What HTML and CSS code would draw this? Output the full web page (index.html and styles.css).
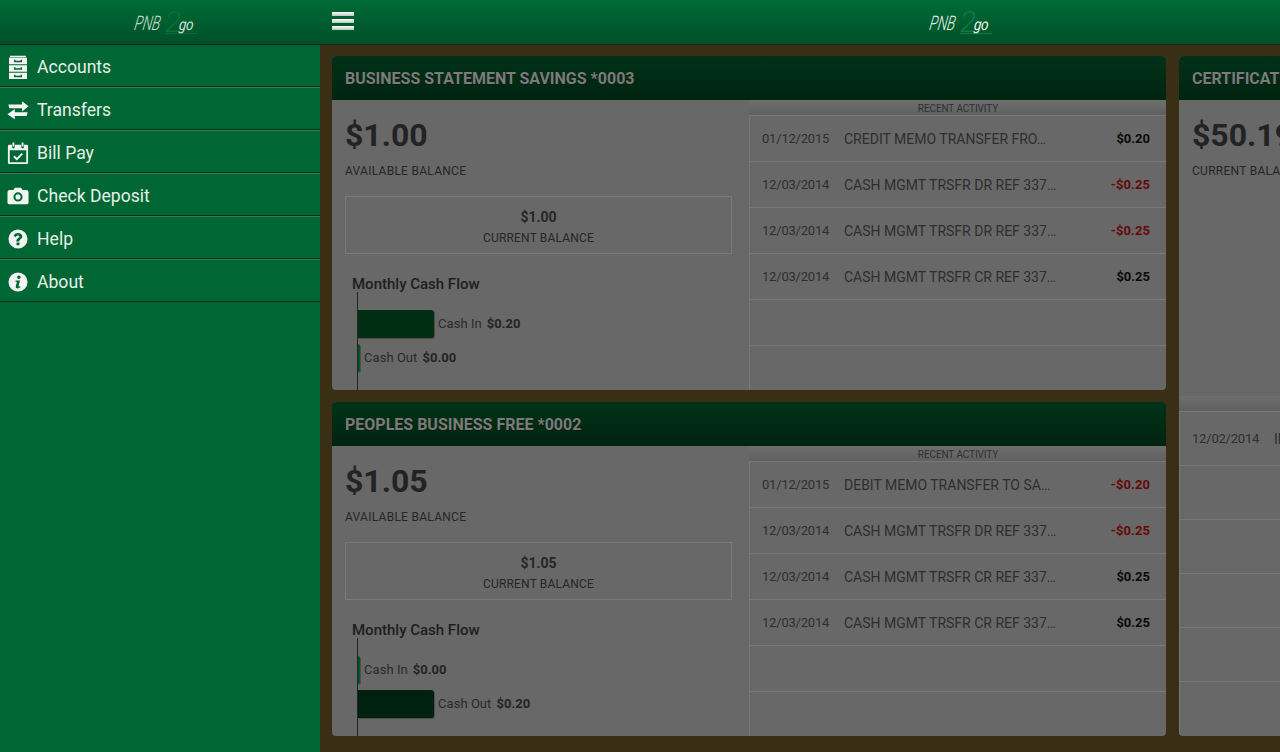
FILE: index.html
```html
<!DOCTYPE html>
<html lang="en">
<head>
<meta charset="utf-8">
<title>PNB2go</title>
<link rel="stylesheet" href="styles.css">
</head>
<body>
<div class="app">
  <aside class="sidebar">
    <header class="bar bar-side">
      <div class="logo"><span class="logo-pnb"><span>PNB</span></span><span class="logo-two">2</span><span class="logo-go">go</span></div>
    </header>
    <nav class="menu">
      <a class="item"><svg class="ico" viewBox="0 -0.7 20 24"><path fill="#f2f5f2" fill-rule="evenodd" d="M2 0h16v1.500H2zM1 2h18v6.500H1zM1 9.500h18v6.500H1zM1 17h18v6.500H1zM6 4v2.500h8V4h-1.500v1h-5V4zM6 11.500V14h8v-2.500h-1.500v1h-5v-1zM6 19v2.500h8V19h-1.500v1h-5v-1z"/></svg><span>Accounts</span></a>
      <a class="item"><svg class="ico" viewBox="0 0 24 24"><path fill="#f2f5f2" d="M1.500 6h15V2.500l7 5.500-7 5.500V10h-14zM22.500 14.500h-14V11L.5 16.500 8.500 22v-3.500h13z"/></svg><span>Transfers</span></a>
      <a class="item"><svg class="ico" viewBox="0 0 24 24"><path fill="#f2f5f2" fill-rule="evenodd" d="M2.500 3h3v2.500a1.500 1.500 0 0 0 3 0V3h7v2.500a1.500 1.500 0 0 0 3 0V3h3A1.500 1.500 0 0 1 23 4.500v18a1.500 1.500 0 0 1-1.500 1.500h-19A1.500 1.500 0 0 1 1 22.500v-18A1.500 1.500 0 0 1 2.500 3zM3 9v13h18V9z"/><path fill="#f2f5f2" d="M6 .5h2v4.500H6zM16 .5h2v4.500h-2z"/><path fill="none" stroke="#f2f5f2" stroke-width="2.200" d="M7.500 15.500l3.200 3.200 6-6"/></svg><span>Bill Pay</span></a>
      <a class="item"><svg class="ico" viewBox="0 0 24 24"><path fill="#f2f5f2" fill-rule="evenodd" d="M3 5.500h4L8.500 3h7L17 5.500h4A2.500 2.500 0 0 1 23.500 8v11a2 2 0 0 1-2 2h-19a2 2 0 0 1-2-2V8A2.500 2.500 0 0 1 3 5.500zm9 2.500a5 5 0 1 0 0 10 5 5 0 0 0 0-10zm0 2.200a2.800 2.800 0 1 1 0 5.600 2.800 2.800 0 0 1 0-5.600z"/></svg><span>Check Deposit</span></a>
      <a class="item"><svg class="ico" viewBox="0 0 24 24"><path fill="#f2f5f2" fill-rule="evenodd" d="M12 1.600a10.400 10.400 0 1 1 0 20.800 10.400 10.400 0 0 1 0-20.800zm-1.600 14.300v2.900h3.200v-2.900zM12 5.500c-2.400 0-4.100 1.100-4.700 3.300l2.400 1c.4-1.100 1.100-1.700 2.200-1.700.9 0 1.600.5 1.600 1.200 0 1.500-3.300 1.800-3.300 5.300h3.200c0-2.200 3.300-2.500 3.300-5.500 0-2.200-2.200-3.600-4.700-3.600z"/></svg><span>Help</span></a>
      <a class="item"><svg class="ico" viewBox="0 0 24 24"><path fill="#f2f5f2" fill-rule="evenodd" d="M12 1.600a10.400 10.400 0 1 1 0 20.800 10.400 10.400 0 0 1 0-20.800zm1 3.400a1.900 1.900 0 1 0 0 3.800 1.900 1.900 0 0 0 0-3.800zM9.300 10.400v1.300h1.500l-1.200 5c-.3 1.600.5 2.300 1.800 2.300 1.200 0 2.400-.6 3.300-1.500l-.5-1.100c-.4.400-1 .6-1.300.6-.3 0-.4-.2-.3-.6l1.600-6z"/></svg><span>About</span></a>
    </nav>
  </aside>

  <div class="main">
    <header class="bar bar-main">
      <div class="burger"><i></i><i></i><i></i></div>
      <div class="logo logo-main"><span class="logo-pnb"><span>PNB</span></span><span class="logo-two">2</span><span class="logo-go">go</span></div>
    </header>
    <div class="content">
      <div class="column">
        <section class="card">
          <h2 class="card-title">BUSINESS STATEMENT SAVINGS *0003</h2>
          <div class="card-body">
            <div class="summary">
              <div class="big">$1.00</div>
              <div class="cap">AVAILABLE BALANCE</div>
              <div class="box"><b>$1.00</b><span>CURRENT BALANCE</span></div>
              <div class="flow-title">Monthly Cash Flow</div>
              <div class="chart">
                <div class="flow"><div class="fill"></div><span>Cash In</span><b>$0.20</b></div>
                <div class="flow"><div class="fill tiny"></div><span>Cash Out</span><b>$0.00</b></div>
              </div>
            </div>
            <div class="activity">
              <div class="act-head">RECENT ACTIVITY</div>
              <div class="row"><span class="date">01/12/2015</span><span class="desc">CREDIT MEMO TRANSFER FRO…</span><b class="amt">$0.20</b></div>
              <div class="row"><span class="date">12/03/2014</span><span class="desc">CASH MGMT TRSFR DR REF 337…</span><b class="amt neg">-$0.25</b></div>
              <div class="row"><span class="date">12/03/2014</span><span class="desc">CASH MGMT TRSFR DR REF 337…</span><b class="amt neg">-$0.25</b></div>
              <div class="row"><span class="date">12/03/2014</span><span class="desc">CASH MGMT TRSFR CR REF 337…</span><b class="amt">$0.25</b></div>
              <div class="row"></div>
              <div class="row last"></div>
            </div>
          </div>
        </section>
        <section class="card">
          <h2 class="card-title">PEOPLES BUSINESS FREE *0002</h2>
          <div class="card-body">
            <div class="summary">
              <div class="big">$1.05</div>
              <div class="cap">AVAILABLE BALANCE</div>
              <div class="box"><b>$1.05</b><span>CURRENT BALANCE</span></div>
              <div class="flow-title">Monthly Cash Flow</div>
              <div class="chart">
                <div class="flow"><div class="fill tiny"></div><span>Cash In</span><b>$0.00</b></div>
                <div class="flow"><div class="fill out"></div><span>Cash Out</span><b>$0.20</b></div>
              </div>
            </div>
            <div class="activity">
              <div class="act-head">RECENT ACTIVITY</div>
              <div class="row"><span class="date">01/12/2015</span><span class="desc">DEBIT MEMO TRANSFER TO SA…</span><b class="amt neg">-$0.20</b></div>
              <div class="row"><span class="date">12/03/2014</span><span class="desc">CASH MGMT TRSFR DR REF 337…</span><b class="amt neg">-$0.25</b></div>
              <div class="row"><span class="date">12/03/2014</span><span class="desc">CASH MGMT TRSFR CR REF 337…</span><b class="amt">$0.25</b></div>
              <div class="row"><span class="date">12/03/2014</span><span class="desc">CASH MGMT TRSFR CR REF 337…</span><b class="amt">$0.25</b></div>
              <div class="row"></div>
              <div class="row last"></div>
            </div>
          </div>
        </section>
      </div>
      <section class="card card-tall">
        <h2 class="card-title">CERTIFICATE OF DEPOSIT</h2>
        <div class="tall-top">
          <div class="big">$50.19</div>
          <div class="cap">CURRENT BALANCE</div>
        </div>
        <div class="act-head tall-head"></div>
        <div class="activity tall-activity">
          <div class="row wide"><span class="date">12/02/2014</span><span class="desc">INTEREST</span></div>
          <div class="row wide"></div>
          <div class="row wide"></div>
          <div class="row wide"></div>
          <div class="row wide"></div>
          <div class="row wide last"></div>
        </div>
      </section>
    </div>
  </div>
</div>
</body>
</html>
```
FILE: styles.css
```css
* { box-sizing: border-box; }
html, body { margin: 0; height: 100%; overflow: hidden; }
body { font-family: Roboto, "Liberation Sans", sans-serif; color: #262626; }
.app { display: flex; width: 1280px; height: 752px; overflow: hidden; }

.sidebar { width: 320px; flex: none; background: #006633; }
.bar {
  height: 45px;
  background: linear-gradient(#006b36, #005029);
  border-bottom: 1px solid #15231a;
  display: flex;
  align-items: center;
}
.bar-side { justify-content: center; padding-left: 10px; }
.bar-main { flex: none; padding: 0 12px; }

.logo { display: flex; align-items: center; width: 60px; height: 30px; font-family: Roboto, sans-serif; font-style: italic; color: #d4e3d8; font-weight: 300; }
.logo-pnb { width: 27px; flex: none; font-size: 20px; line-height: 24px; margin-top: 2px; white-space: nowrap; }
.logo-pnb span { display: inline-block; transform-origin: left center; transform: scaleX(.68) skewX(-14deg); }
.logo-two { width: 14px; flex: none; font-size: 30px; line-height: 30px; color: #0a6d38; font-weight: 300; margin: -3px -18px 0 3px; border-bottom: 1px solid #0a6d38; box-sizing: content-box; height: 26px; padding-right: 18px; }
.logo-go { font-size: 16px; font-weight: 400; margin: 4px 0 0 -1px; letter-spacing: -0.6px; transform: scaleX(.85) skewX(-8deg); }
.logo-main { color: #f1f8f2; }
.logo-main .logo-two { color: #0d7a42; border-color: #0d7a42; }

.burger { align-self: flex-start; width: 22px; margin: 12px 576px 0 0; flex: none; display: flex; flex-direction: column; gap: 3px; }
.burger i { display: block; height: 4px; background: linear-gradient(#fff, #b5c9bc); }

.item {
  display: flex;
  align-items: center;
  height: 43px;
  padding: 3px 0 0 7px;
  gap: 8px;
  color: #e6f0e9;
  font-size: 17.6px;
  background: #006633;
  border-top: 1px solid #2d7f53;
  border-bottom: 1px solid #122a1c;
}
.item:first-child { height: 42px; border-top: 0; padding-top: 2px; }
.ico { width: 22px; height: 24px; flex: none; }

.main { flex: 1; min-width: 0; display: flex; flex-direction: column; background: #3a2e14; }
.content { display: flex; gap: 13px; padding: 11px 0 0 12px; flex: 1; overflow: hidden; }
.column { display: flex; flex-direction: column; gap: 12px; flex: none; width: 834px; }

.card { background: #686868; border-radius: 4px; overflow: hidden; height: 334px; display: flex; flex-direction: column; }
.card-title {
  margin: 0;
  height: 44px;
  flex: none;
  padding: 0 13px;
  display: flex;
  align-items: center;
  white-space: nowrap;
  font-size: 16px;
  font-weight: 700;
  color: #7b7b7b;
  text-shadow: 0 1px 0 #0d1a12;
  background: linear-gradient(#003218, #00240f);
}
.card-body { display: flex; flex: 1; min-height: 0; }
.summary { width: 417px; flex: none; padding: 0 17px 0 13px; }
.big { font-size: 32px; font-weight: 700; color: #232323; line-height: 38px; margin-top: 16px; }
.cap { font-size: 12px; letter-spacing: 0.27px; line-height: 16px; margin-top: 9px; color: #262626; }
.box {
  margin-top: 17px;
  height: 58px;
  border: 1px solid #7a7a7a;
  display: flex;
  flex-direction: column;
  align-items: center;
  color: #262626;
}
.box b { font-size: 14px; font-weight: 700; line-height: 16px; margin-top: 12px; }
.box span { font-size: 12px; letter-spacing: 0.17px; line-height: 16px; margin-top: 5px; }
.flow-title { font-size: 15px; font-weight: 500; margin: 21px 0 0 7px; line-height: 18px; color: #1e1e1e; }
.chart {
  margin: -1px 0 0 12px;
  border-left: 1px solid #232323;
  height: 100px;
  padding-top: 18px;
  display: flex;
  flex-direction: column;
  gap: 6px;
}
.flow { display: flex; align-items: center; height: 28px; font-size: 13px; letter-spacing: 0.05px; color: #2a2a2a; }
.flow span, .flow b { margin-top: -2px; }
.flow b { font-weight: 700; margin-left: 5px; color: #242424; }
.fill { width: 76px; height: 28px; background: #002e12; border-radius: 0 3px 3px 0; box-shadow: 1px 1px 0 #4d4d4d; margin-right: 4px; }
.fill.tiny { width: 2px; background: #03522a; }
.fill.out { background: #002010; }

.activity { flex: 1; min-width: 0; display: flex; flex-direction: column; border-left: 1px solid #777; }
.act-head {
  height: 15px;
  flex: none;
  font-size: 10px;
  letter-spacing: -0.1px;
  line-height: 17px;
  text-align: center;
  color: #2f2f2f;
  background: linear-gradient(#6e6e6e, #606060);
  margin-left: -1px;
  padding-left: 1px;
}
.row {
  height: 46px;
  flex: none;
  border-top: 1px solid #787878;
  display: flex;
  align-items: center;
  padding: 0 16px 0 12px;
  font-size: 14px;
  color: #2e2e2e;
}
.row.last { flex: 1; }
.date { width: 82px; flex: none; font-size: 13px; letter-spacing: -0.2px; }
.desc { flex: 1; white-space: nowrap; overflow: hidden; }
.amt { font-size: 13px; font-weight: 700; color: #0a0a0a; }
.amt.neg { color: #650a0a; letter-spacing: 0.1px; }

.card-tall { width: 400px; flex: none; height: 680px; }
.tall-top { padding: 0 13px; height: 296px; flex: none; }
.tall-head { margin: 0; }
.tall-activity { flex: 1; }
.row.wide { height: 54px; }
```
